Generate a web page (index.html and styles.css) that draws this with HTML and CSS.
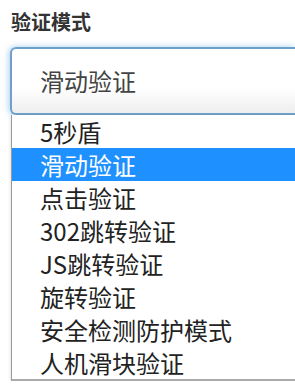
FILE: index.html
```html
<!DOCTYPE html>
<html lang="zh-CN">
<head>
    <meta charset="UTF-8">
    <title>验证模式</title>
    <link rel="stylesheet" href="styles.css">
</head>
<body>
    <div class="form-group">
        <label class="field-label" for="mode">验证模式</label>
        <div class="select-box" id="mode">滑动验证</div>
        <ul class="option-list">
            <li class="option">5秒盾</li>
            <li class="option selected">滑动验证</li>
            <li class="option">点击验证</li>
            <li class="option">302跳转验证</li>
            <li class="option">JS跳转验证</li>
            <li class="option">旋转验证</li>
            <li class="option">安全检测防护模式</li>
            <li class="option">人机滑块验证</li>
        </ul>
    </div>
</body>
</html>
```

FILE: styles.css
```css
body {
    margin: 0;
    background-color: #ffffff;
    overflow: hidden;
    font-family: "Noto Sans CJK SC", "Liberation Sans", sans-serif;
}

/* 右侧超出窗口，去掉右边框 */
.form-group {
    padding: 12px 0 0 10px;
}

.field-label {
    display: block;
    font-size: 20px;
    line-height: 20px;
    font-weight: bold;
    color: #333;
    margin-bottom: 15px;
    padding-left: 1px;
}

.select-box {
    height: 68px;
    box-sizing: border-box;
    border: 2px solid #6f9fca;
    border-right: none;
    border-radius: 6px 0 0 6px;
    padding-left: 28px;
    font-size: 24px;
    line-height: 64px;
    color: #444;
    background: linear-gradient(to bottom, #ffffff 0%, #ffffff 60%, #eeeeee 100%);
    box-shadow: -1px 0 6px rgba(102, 175, 233, 0.6);
}

.option-list {
    list-style: none;
    margin: 0 0 0 1px;
    padding: 0;
    border-left: 1px solid #999;
    border-bottom: 2px solid #aaa;
    background-color: #ffffff;
    box-shadow: 0 2px 4px rgba(0, 0, 0, 0.15);
}

.option {
    height: 33px;
    line-height: 33px;
    padding-left: 28px;
    font-size: 24px;
    color: #222;
}

.option.selected {
    background-color: #1e90ff;
    color: #ffffff;
}
```
